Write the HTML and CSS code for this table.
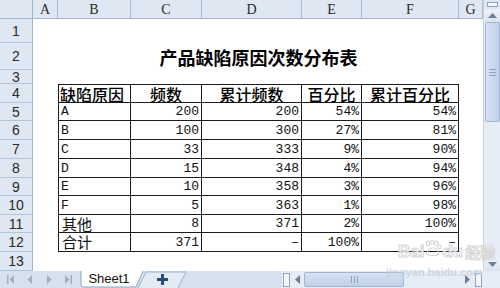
FILE: index.html
```html
<!DOCTYPE html>
<html lang="zh-CN">
<head>
<meta charset="utf-8">
<title>产品缺陷原因次数分布表</title>
<link rel="stylesheet" href="styles.css">
</head>
<body>
<div class="app">
  <div class="main">
    <div class="sheet">
      <div class="corner-cell"></div>
      <div class="ch">A</div><div class="ch">B</div><div class="ch">C</div><div class="ch">D</div><div class="ch">E</div><div class="ch">F</div><div class="ch">G</div>

      <div class="rh">1</div><div></div><div></div><div></div><div></div><div></div><div></div><div></div>
      <div class="rh">2</div><div></div><div class="title">产品缺陷原因次数分布表</div><div></div>
      <div class="rh">3</div><div></div><div></div><div></div><div></div><div></div><div></div><div></div>

      <div class="rh">4</div><div></div>
      <div class="t th first top">缺陷原因</div><div class="t th top">频数</div><div class="t th top">累计频数</div><div class="t th top">百分比</div><div class="t th top">累计百分比</div>
      <div></div>

      <div class="rh">5</div><div></div>
      <div class="t first l">A</div><div class="t n">200</div><div class="t n">200</div><div class="t n">54%</div><div class="t n">54%</div>
      <div></div>

      <div class="rh">6</div><div></div>
      <div class="t first l">B</div><div class="t n">100</div><div class="t n">300</div><div class="t n">27%</div><div class="t n">81%</div>
      <div></div>

      <div class="rh">7</div><div></div>
      <div class="t first l">C</div><div class="t n">33</div><div class="t n">333</div><div class="t n">9%</div><div class="t n">90%</div>
      <div></div>

      <div class="rh">8</div><div></div>
      <div class="t first l">D</div><div class="t n">15</div><div class="t n">348</div><div class="t n">4%</div><div class="t n">94%</div>
      <div></div>

      <div class="rh">9</div><div></div>
      <div class="t first l">E</div><div class="t n">10</div><div class="t n">358</div><div class="t n">3%</div><div class="t n">96%</div>
      <div></div>

      <div class="rh">10</div><div></div>
      <div class="t first l">F</div><div class="t n">5</div><div class="t n">363</div><div class="t n">1%</div><div class="t n">98%</div>
      <div></div>

      <div class="rh">11</div><div></div>
      <div class="t first l cn">其他</div><div class="t n">8</div><div class="t n">371</div><div class="t n">2%</div><div class="t n">100%</div>
      <div></div>

      <div class="rh">12</div><div></div>
      <div class="t first l cn">合计</div><div class="t n">371</div><div class="t n">–</div><div class="t n">100%</div><div class="t n">–</div>
      <div></div>

      <div class="rh">13</div><div></div><div></div><div></div><div></div><div></div><div></div><div></div>
    </div>

    <div class="vscroll">
      <div class="split"><span class="split-bar"></span></div>
      <div class="vbtn"><svg width="9" height="5" viewBox="0 0 9 5"><path d="M0 5 L4.5 0 L9 5 Z" fill="#6d7f96"/></svg></div>
      <div class="vthumb"><span class="grip-h"></span><span class="grip-h"></span><span class="grip-h"></span></div>
      <div class="vtrack"></div>
      <div class="vbtn"><svg width="9" height="5" viewBox="0 0 9 5"><path d="M0 0 L4.5 5 L9 0 Z" fill="#6d7f96"/></svg></div>
    </div>
  </div>

  <div class="tabbar">
    <div class="nav">
      <svg width="8" height="9" viewBox="0 0 8 9"><rect x="0" y="0" width="1.5" height="9" fill="#a3afbf"/><path d="M7 0 L2.5 4.5 L7 9 Z" fill="#a3afbf"/></svg>
      <svg width="8" height="9" viewBox="0 0 8 9"><path d="M6 0 L1.5 4.5 L6 9 Z" fill="#a3afbf"/></svg>
      <svg width="8" height="9" viewBox="0 0 8 9"><path d="M2 0 L6.5 4.5 L2 9 Z" fill="#a3afbf"/></svg>
      <svg width="8" height="9" viewBox="0 0 8 9"><path d="M1 0 L5.5 4.5 L1 9 Z" fill="#a3afbf"/><rect x="6.5" y="0" width="1.5" height="9" fill="#a3afbf"/></svg>
    </div>
    <div class="tabs">
      <div class="tab-sheet">
        <svg class="tab-shape" width="64" height="17" viewBox="0 0 64 17"><path d="M1 0 L1 14 Q1 16 3 16 L56 16 L63 0" fill="#ffffff" stroke="#8ea3bf" stroke-width="1"/></svg>
        <span class="tab-label">Sheet1</span>
      </div>
      <div class="tab-add">
        <svg class="tab-shape" width="50" height="17" viewBox="0 0 50 17"><path d="M1 17 L9 1 L49 1 L41 17" fill="#e3eaf4" stroke="#9fb2cb" stroke-width="1"/></svg>
        <svg class="plus" width="11" height="11" viewBox="0 0 11 11"><rect x="4" y="0" width="3" height="11" fill="#2c4a78"/><rect x="0" y="4" width="11" height="3" fill="#2c4a78"/></svg>
      </div>
    </div>
    <div class="spacer"></div>
    <div class="hscroll">
      <div class="hsplit"></div>
      <div class="hbtn"><svg width="5" height="9" viewBox="0 0 5 9"><path d="M5 0 L0 4.5 L5 9 Z" fill="#6d7f96"/></svg></div>
      <div class="hthumb"><span class="grip-v"></span><span class="grip-v"></span><span class="grip-v"></span></div>
      <div class="htrack"></div>
      <div class="hbtn"><svg width="5" height="9" viewBox="0 0 5 9"><path d="M0 0 L5 4.5 L0 9 Z" fill="#6d7f96"/></svg></div>
      <div class="hsplit"></div>
    </div>
    <div class="corner"></div>
  </div>

  <div class="watermark">
    <div class="wm-top"><span>Bai</span><svg class="paw" width="18" height="17" viewBox="0 0 22 20"><g fill="none" stroke="#d4d4d4" stroke-width="1.3"><ellipse cx="5" cy="4" rx="2" ry="3"/><ellipse cx="10" cy="2.5" rx="2" ry="2.5"/><ellipse cx="15" cy="4" rx="2" ry="3"/><ellipse cx="19" cy="8" rx="2" ry="2.5"/><path d="M3 17 Q5 9 11 9 Q17 9 18 17 Q11 20 3 17 Z"/></g></svg><span>du</span><span class="wm-cn">经验</span></div>
    <div class="wm-url">jingyan.baidu.com</div>
  </div>
</div>
</body>
</html>
```

FILE: styles.css
```css
* { box-sizing: border-box; }

html, body {
  margin: 0;
  padding: 0;
  background: #ffffff;
}

.app {
  position: relative;
  width: 500px;
  height: 288px;
  overflow: hidden;
  display: flex;
  flex-direction: column;
  font-family: "Liberation Sans", "Noto Sans CJK SC", sans-serif;
  color: #222;
}

.main {
  display: flex;
  height: 271px;
}

.sheet {
  width: 483px;
  display: grid;
  grid-template-columns: 33px 25px 73px 71px 100px 60px 97px 24px;
  grid-template-rows: 19px 24px 27px 14px 19px 18px 19px 19px 19px 18px 19px 18px 19px 19px;
  background: #ffffff;
}

.corner-cell {
  background: #dfe7f2;
  border-right: 1px solid #9fb4cf;
  border-bottom: 1px solid #9fb4cf;
}

.ch {
  background: #dfe7f2;
  border-right: 1px solid #a7bad3;
  border-bottom: 1px solid #9fb4cf;
  display: flex;
  align-items: center;
  justify-content: center;
  font-family: "Liberation Serif", serif;
  font-size: 14px;
  color: #2a2a2a;
  padding-top: 1px;
}

.rh {
  background: #dfe7f2;
  border-right: 1px solid #9fb4cf;
  border-bottom: 1px solid #b3c4da;
  display: flex;
  align-items: center;
  justify-content: center;
  font-family: "Liberation Sans", sans-serif;
  font-size: 14px;
  color: #2a2a2a;
}

.title {
  grid-column: span 5;
  display: flex;
  align-items: center;
  justify-content: center;
  font-family: "Noto Sans CJK SC", sans-serif;
  font-weight: 700;
  font-size: 18px;
  line-height: 1;
  color: #000;
}

.t {
  border-right: 1px solid #1c1c1c;
  border-bottom: 1px solid #1c1c1c;
  display: flex;
  align-items: center;
  font-family: "Liberation Mono", monospace;
  font-size: 13px;
  line-height: 1;
  color: #111;
  white-space: nowrap;
}

.t.top { border-top: 1px solid #1c1c1c; }
.t.first { border-left: 1px solid #1c1c1c; }

.t.th {
  justify-content: center;
  font-family: "Noto Sans CJK SC", sans-serif;
  font-size: 16px;
  font-weight: 500;
  line-height: 16px;
  color: #000;
}

.t.first.th { justify-content: flex-start; padding-left: 1px; }

.t.l {
  justify-content: flex-start;
  padding-left: 2px;
}

.t.cn {
  font-family: "Noto Sans CJK SC", sans-serif;
  font-size: 15px;
  line-height: 15px;
  padding-left: 3px;
  padding-bottom: 1px;
}

.t.n {
  justify-content: flex-end;
  padding-right: 2px;
}

/* vertical scrollbar */
.vscroll {
  width: 17px;
  display: flex;
  flex-direction: column;
  align-items: center;
  background: #e6edf6;
  border-left: 1px solid #c6d3e4;
}

.split {
  height: 9px;
  width: 100%;
  display: flex;
  align-items: center;
  justify-content: center;
  background: #dfe7f2;
}

.split-bar {
  width: 11px;
  height: 5px;
  border: 1px solid #8ea4c1;
  background: #f3f6fa;
}

.vbtn {
  width: 15px;
  height: 13px;
  display: flex;
  align-items: center;
  justify-content: center;
  background: linear-gradient(#eef3f9, #d8e2ef);
}

.vthumb {
  width: 15px;
  height: 100px;
  border: 1px solid #9fb4d1;
  border-radius: 2px;
  background: linear-gradient(to right, #d7e3f2, #bfd0e8);
  display: flex;
  flex-direction: column;
  align-items: center;
  justify-content: center;
  gap: 2px;
}

.grip-h {
  width: 7px;
  height: 1px;
  background: #8ca3c2;
}

.vtrack { flex: 1; }

/* tab bar */
.tabbar {
  height: 17px;
  display: flex;
  background: #d7e1ed;
}

.nav {
  width: 78px;
  display: flex;
  align-items: center;
  padding-left: 7px;
  gap: 11px;
}

.tabs {
  display: flex;
  width: 112px;
}

.tab-sheet {
  position: relative;
  width: 64px;
  height: 17px;
  margin-left: 2px;
}

.tab-add {
  position: relative;
  width: 50px;
  height: 17px;
  margin-left: -7px;
  display: flex;
  align-items: center;
  justify-content: center;
}

.tab-shape {
  position: absolute;
  left: 0;
  top: 0;
}

.tab-label {
  position: relative;
  display: block;
  width: 58px;
  text-align: center;
  font-family: "Liberation Sans", sans-serif;
  font-size: 13px;
  line-height: 16px;
  color: #111;
}

.plus { position: relative; }

.spacer { flex: 1; }

.hscroll {
  width: 201px;
  display: flex;
  align-items: center;
  background: #e6edf6;
}

.hsplit {
  width: 7px;
  height: 14px;
  margin: 0 1px;
  border: 1px solid #8ea4c1;
  background: #f3f6fa;
}

.hbtn {
  width: 13px;
  height: 15px;
  display: flex;
  align-items: center;
  justify-content: center;
}

.hthumb {
  width: 100px;
  height: 15px;
  border: 1px solid #9fb4d1;
  border-radius: 2px;
  background: linear-gradient(#d7e3f2, #bfd0e8);
  display: flex;
  align-items: center;
  justify-content: center;
  gap: 2px;
}

.grip-v {
  width: 1px;
  height: 7px;
  background: #8ca3c2;
}

.htrack { flex: 1; height: 100%; }

.corner {
  width: 17px;
  background: #e6edf6;
}

/* watermark */
.watermark {
  position: absolute;
  left: 398px;
  top: 243px;
  width: 100px;
  white-space: nowrap;
  pointer-events: none;
  display: flex;
  flex-direction: column;
  align-items: flex-start;
}

.wm-top {
  display: flex;
  align-items: center;
  white-space: nowrap;
  font-family: "Liberation Sans", sans-serif;
  font-weight: 700;
  font-size: 17px;
  color: rgba(255, 255, 255, 0.7);
  -webkit-text-stroke: 1px #d5d5d5;
  line-height: 18px;
}

.paw { margin-top: -7px; }

.wm-cn {
  font-family: "Noto Sans CJK SC", sans-serif;
  font-size: 15px;
  margin-left: 2px;
}

.wm-url {
  font-family: "Liberation Sans", sans-serif;
  font-size: 11px;
  font-weight: 700;
  line-height: 12px;
  color: rgba(200, 208, 220, 0.85);
  margin-left: -12px;
  margin-top: 5px;
}
```
